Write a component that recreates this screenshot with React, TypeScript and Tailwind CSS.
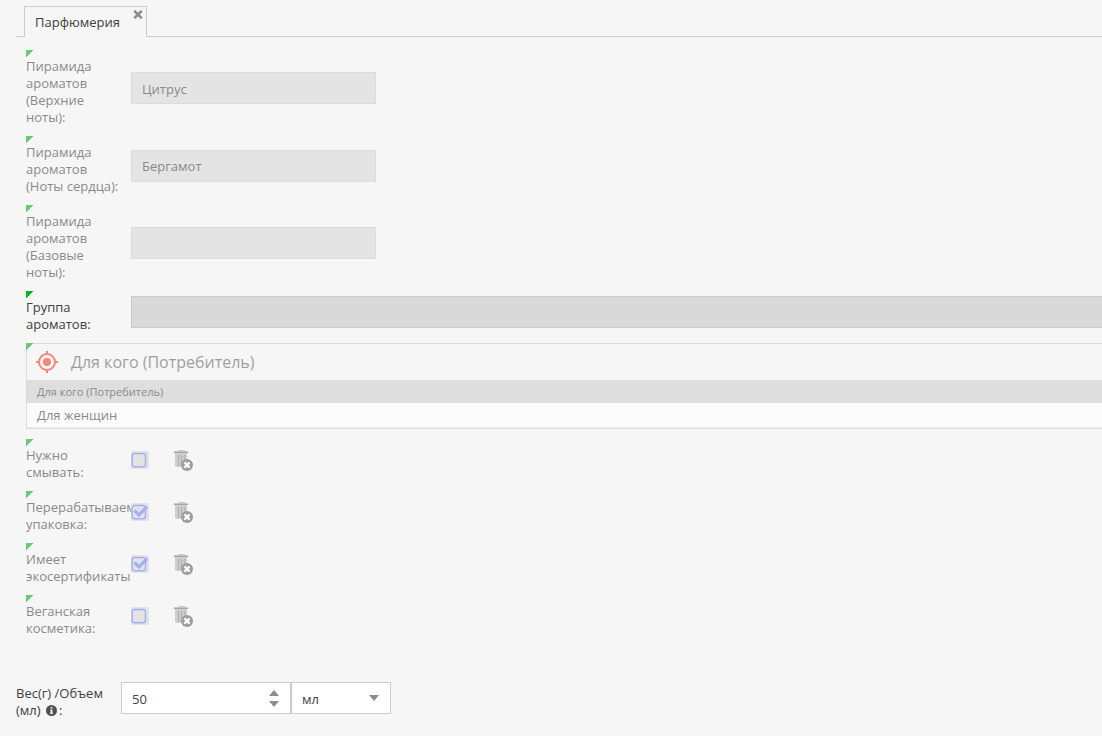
import React, { useState } from 'react';

interface FieldRowProps {
  id: string;
  label: string;
  active?: boolean;
  children: React.ReactNode;
}

const Marker = () => (
  <svg className="block w-[7px] h-[7px]" viewBox="0 0 7 7" shapeRendering="crispEdges" aria-hidden="true">
    <path d="M0 0h7.600L0 7.600z" fill="#0ab01e" />
  </svg>
);

const FieldRow: React.FC<FieldRowProps> = ({ id, label, active = false, children }) => (
  <div className={`flex items-center ${active ? '' : 'opacity-60'}`}>
    <div className="w-[105px] shrink-0 self-start overflow-hidden pr-[10px]">
      <Marker />
      <label htmlFor={id} className="mt-px block">
        {label}
      </label>
    </div>
    {children}
  </div>
);

const TrashIcon = () => (
  <svg className="block w-5 h-[22px]" viewBox="0 0 20 22" aria-hidden="true">
    <path d="M4 1h7v1H4z" fill="#a8a8a8" />
    <path d="M0 2h14v1H0z" fill="#a8a8a8" />
    <path d="M0 3h14v1H0z" fill="#707070" />
    <path d="M1 4h12v14H2.500L1 17z" fill="#b4b4b4" />
    <path d="M4.500 6v11M7.500 6v11M10.500 6v11" stroke="#858585" strokeWidth="1.200" />
    <circle cx="13" cy="16" r="6" fill="#616161" />
    <path d="M10.400 13.400l5.200 5.200M15.600 13.400l-5.200 5.200" stroke="#fff" strokeWidth="2.500" />
  </svg>
);

const TargetIcon = () => (
  <svg className="block w-[22px] h-[22px]" viewBox="0 0 22 22" aria-hidden="true" fill="none">
    <circle cx="11" cy="11" r="8" stroke="#f03e28" strokeWidth="2" />
    <circle cx="11" cy="11" r="4" fill="#f03e28" />
    <path d="M11 0v4M11 18v4M0 11h4M18 11h4" stroke="#f03e28" strokeWidth="2" />
  </svg>
);

const textFields = [
  { id: 'top-notes', label: 'Пирамида ароматов (Верхние ноты):', value: 'Цитрус' },
  { id: 'heart-notes', label: 'Пирамида ароматов (Ноты сердца):', value: 'Бергамот' },
  { id: 'base-notes', label: 'Пирамида ароматов (Базовые ноты):', value: '' },
];

const flags = [
  { id: 'rinse', label: 'Нужно смывать:', checked: false },
  { id: 'recyclable', label: 'Перерабатываемая упаковка:', checked: true },
  { id: 'eco', label: 'Имеет экосертификаты:', checked: true },
  { id: 'vegan', label: 'Веганская косметика:', checked: false },
];

const FlagControls = ({ id, checked }: { id: string; checked: boolean }) => (
  <>
    <span className="grid w-[18px] h-[18px] bg-[#d9d9d9]">
      <input
        id={id}
        type="checkbox"
        checked={checked}
        disabled
        readOnly
        className="col-start-1 row-start-1 h-[18px] w-[18px] appearance-none"
      />
      <svg className="pointer-events-none col-start-1 row-start-1 w-[18px] h-[18px]" viewBox="0 0 18 18" fill="none" aria-hidden="true">
        <rect x="1.200" y="2.500" width="13.300" height="13.300" rx="2.500" stroke="#6f83f5" strokeWidth="1.500" />
        {checked && <path d="M3.500 7.500l4.500 4.500L16 3.700" stroke="#6f83f5" strokeWidth="3.300" />}
      </svg>
    </span>
    <button type="button" disabled aria-label="Очистить" className="ml-[25px]">
      <TrashIcon />
    </button>
  </>
);

const Tabs = () => (
  <div className="flex pl-4 pt-[6px]">
    <div className="w-2 border-b border-[#ccc]" />
    <div className="flex h-[31px] border border-b-0 border-[#ccc] pl-[10px] pr-[3px]">
      <button type="button" className="pr-[13px]">
        Парфюмерия
      </button>
      <button type="button" aria-label="Закрыть" className="mt-[3px] self-start">
        <svg className="block w-[10px] h-[9px]" viewBox="0 0 10 9" aria-hidden="true">
          <path d="M1.200 0.800l7.600 7.400M8.800 0.800L1.200 8.200" stroke="#8c8c8c" strokeWidth="2.600" />
        </svg>
      </button>
    </div>
    <div className="flex-1 border-b border-[#ccc]" />
  </div>
);

const ConsumerPanel = () => (
  <section className="flex opacity-60">
    <div className="w-full border border-r-0 border-[#ccc]">
      <div className="grid h-9">
        <div className="col-start-1 row-start-1 -ml-px -mt-px">
          <Marker />
        </div>
        <h2 className="col-start-1 row-start-1 flex items-center gap-[13px] pl-[9px] text-[16px] text-[#666]">
          <TargetIcon />
          Для кого (Потребитель)
        </h2>
      </div>
      <table className="w-full border-separate border-spacing-0 text-left">
        <thead>
          <tr className="h-[23px] bg-[#cfcfcf] text-[11px]">
            <th className="px-[10px] font-normal">Для кого (Потребитель)</th>
          </tr>
        </thead>
        <tbody>
          <tr className="h-[25px] bg-white">
            <td className="border-b border-[#e6e6e6] px-[10px]">Для женщин</td>
          </tr>
        </tbody>
      </table>
    </div>
  </section>
);

const WeightField = () => {
  const [amount, setAmount] = useState(50);
  const [unit, setUnit] = useState('мл');

  return (
    <div className="mt-[45px] flex items-start">
      <label htmlFor="weight" className="mt-[3px] w-[105px] shrink-0">
        Вес(г) /Объем
        <br />
        (мл){' '}
        <svg className="ml-[2px] mr-[2px] -mt-[2px] inline-block w-[11px] h-[11px]" viewBox="0 0 11 11" aria-hidden="true">
          <circle cx="5.500" cy="5.500" r="5.500" fill="#505050" />
          <path d="M4.700 2h1.700v1.500H4.700zM4.200 4.500h2.200v3.300H7v1H4v-1h.7V5.500h-.5z" fill="#fff" />
        </svg>
        :
      </label>
      <div className="flex h-8 w-[170px] border border-[#ccc] bg-white">
        <input
          id="weight"
          type="text"
          inputMode="numeric"
          value={amount}
          onChange={(e) => setAmount(parseInt(e.target.value) || 0)}
          className="min-w-0 flex-1 pl-[10px] pt-[2px] outline-none"
        />
        <div className="flex w-8 flex-col items-center justify-center gap-[5px]">
          <button type="button" aria-label="Больше" onClick={() => setAmount(amount + 1)}>
            <svg className="block w-[10px] h-[6px]" viewBox="0 0 10 6">
              <path d="M0 6l5-6 5 6z" fill="#8c8c8c" />
            </svg>
          </button>
          <button type="button" aria-label="Меньше" onClick={() => setAmount(amount - 1)}>
            <svg className="block w-[10px] h-[6px]" viewBox="0 0 10 6">
              <path d="M0 0l5 6 5-6z" fill="#8c8c8c" />
            </svg>
          </button>
        </div>
      </div>
      <div className="grid h-8 w-[100px] items-center border border-[#ccc] bg-white">
        <select
          aria-label="Единица измерения"
          value={unit}
          onChange={(e) => setUnit(e.target.value)}
          className="col-start-1 row-start-1 h-full w-full appearance-none pl-[10px] pt-[2px] outline-none"
        >
          <option>мл</option>
          <option>г</option>
        </select>
        <svg className="pointer-events-none col-start-1 row-start-1 mr-[11px] h-[6px] w-[10px] justify-self-end" viewBox="0 0 10 6" aria-hidden="true">
          <path d="M0 0l5 6 5-6z" fill="#8c8c8c" />
        </svg>
      </div>
    </div>
  );
};

const App: React.FC = () => {
  return (
    <main className="min-h-screen overflow-x-hidden bg-[#f6f6f6] font-['Open_Sans','Noto_Sans',sans-serif] text-[13px] leading-[17px] text-[#404040]">
      <Tabs />
      <div className="pl-4">
        <div className="flex flex-col gap-[10px] pl-[10px] pt-[13px]">
          {textFields.map((field) => (
            <FieldRow key={field.id} id={field.id} label={field.label}>
              <input
                id={field.id}
                type="text"
                value={field.value}
                disabled
                readOnly
                className="h-8 w-[245px] border border-[#ccc] bg-[#d9d9d9] px-[10px] pt-px"
              />
            </FieldRow>
          ))}
          <FieldRow id="group" label="Группа ароматов:" active>
            <input
              id="group"
              type="text"
              disabled
              className="h-8 min-w-0 flex-1 border border-r-0 border-[#ccc] bg-[#d9d9d9] px-[10px]"
            />
          </FieldRow>
          <ConsumerPanel />
          {flags.map((flag) => (
            <FieldRow key={flag.id} id={flag.id} label={flag.label}>
              <FlagControls id={flag.id} checked={flag.checked} />
            </FieldRow>
          ))}
        </div>
        <WeightField />
      </div>
    </main>
  );
};

export default App;
